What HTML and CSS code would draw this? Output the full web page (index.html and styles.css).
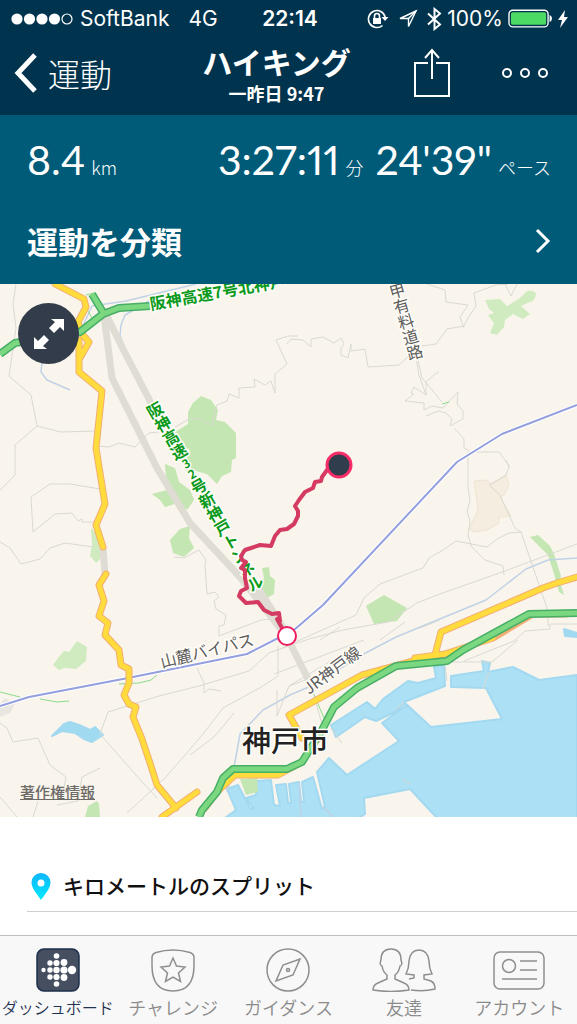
FILE: index.html
```html
<!DOCTYPE html>
<html lang="ja">
<head>
    <meta charset="UTF-8">
    <meta name="viewport" content="width=device-width, initial-scale=1.0">
    <title>ハイキング</title>
    <link rel="stylesheet" href="styles.css">
</head>
<body>
    <header class="top">
        <div class="status-bar">
            <div class="status-left">
                <svg width="62" height="14" viewBox="0 0 62 14" aria-hidden="true">
                    <g fill="#fff"><circle cx="6" cy="7" r="5.6"/><circle cx="18.5" cy="7" r="5.6"/><circle cx="31" cy="7" r="5.6"/><circle cx="43.5" cy="7" r="5.6"/></g>
                    <circle cx="56" cy="7" r="5" fill="none" stroke="#fff" stroke-width="1.2"/>
                </svg>
                <span class="carrier">SoftBank</span>
                <span>4G</span>
            </div>
            <time class="clock">22:14</time>
            <div class="status-right">
                <svg width="22" height="20" viewBox="0 0 22 20" fill="none" stroke="#fff" stroke-width="1.6" aria-hidden="true">
                    <path d="M15.500 16.500A8.500 8.500 0 1 1 18.200 8"/>
                    <path d="M14.500 8h7l-3.500 4z" fill="#fff" stroke="none"/>
                    <rect x="6" y="9" width="8" height="6" fill="#fff" stroke="none"/>
                    <path d="M7.500 9V7a2.500 2.500 0 0 1 5 0v2"/>
                </svg>
                <svg class="location" width="20" height="20" viewBox="0 0 20 20" fill="none" stroke="#fff" stroke-width="1.4" aria-hidden="true">
                    <path d="M18 2L2 9.500h8.500V17.500z"/>
                    <path d="M18 2l-7.500 7.500"/>
                </svg>
                <svg width="15" height="24" viewBox="0 0 15 24" fill="none" stroke="#fff" stroke-width="2" aria-hidden="true">
                    <path d="M1 6.500l12 11L7.500 22V2L13 6.500l-12 11"/>
                </svg>
                <span class="percent">100%</span>
                <svg width="44" height="20" viewBox="0 0 45 20" aria-hidden="true">
                    <rect x="1" y="1" width="40" height="17" rx="4" fill="none" stroke="#fff" stroke-width="1.4"/>
                    <rect x="3" y="3" width="36" height="13" rx="2" fill="#4cd964"/>
                    <path d="M42.500 6q2.500 1 2.500 3.500t-2.500 3.500z" fill="#fff"/>
                </svg>
                <svg width="12" height="18" viewBox="0 0 12 18" aria-hidden="true"><path d="M8 0L1 10h4L3 18l8-11H7z" fill="#fff"/></svg>
            </div>
        </div>
        <nav class="nav-bar">
            <a class="back" href="#">
                <svg width="24" height="40" viewBox="0 0 24 40" fill="none" stroke="#fff" stroke-width="5" aria-hidden="true"><path d="M21 2L4 20l17 18"/></svg>
                運動
            </a>
            <div class="title">
                <h1>ハイキング</h1>
                <p>一昨日 9:47</p>
            </div>
            <div class="actions">
                <button type="button" aria-label="共有">
                    <svg width="38" height="50" viewBox="0 0 38 50" fill="none" stroke="#fff" stroke-width="2">
                        <path d="M15 15H2v33h34V15H23M19 31V2M12 10l7-8 7 8"/>
                    </svg>
                </button>
                <button type="button" aria-label="メニュー">
                    <svg width="48" height="12" viewBox="0 0 48 12" fill="none" stroke="#fff" stroke-width="2"><circle cx="6" cy="6" r="4"/><circle cx="24" cy="6" r="4"/><circle cx="42" cy="6" r="4"/></svg>
                </button>
            </div>
        </nav>
    </header>

    <main>
        <section class="summary">
            <div class="stats">
                <p class="stat distance"><strong>8.4</strong><span>km</span></p>
                <p class="stat"><strong>3:27:11</strong><span>分</span></p>
                <p class="stat"><strong>24'39"</strong><span>ペース</span></p>
            </div>
            <a class="classify" href="#">
                運動を分類
                <svg width="16" height="26" viewBox="0 0 16 26" fill="none" stroke="#fff" stroke-width="3" aria-hidden="true"><path d="M2 2l11 11L2 24"/></svg>
            </a>
        </section>

        <section class="map">
            <svg class="map-canvas" viewBox="0 284 577 533">
                <rect class="land" y="284" width="577" height="533"/>

                <!-- parks -->
                <g class="park">
                    <path d="M188 412l5-9 8-7 10 4 7 10-2 10 9 2 11 11v25l-4 2-1 12-9 4-5 8-10-10-15-4-8-10-9-28 13-8z"/>
                    <path d="M152 494l15-4-2-26 10 4 4 14 11 8 4 10-7 10-9-7-13 4-5-7z"/>
                    <path d="M170 540l10-11 10-3-1 12 5 10-10 9-11-4z"/>
                    <path d="M262 568l7-1 1 9 5 4-1 14-7 4-7-10 4-10z"/>
                    <path d="M366 606l18-11 23 13-10 13-23 3z"/>
                    <path d="M85 817l3-11 9-5 2 3 1 13z"/>
                    <path d="M530 537l8-2 12 11 4 8 7 22-1 6 4 13-5-3-5-18-6-19z"/>
                </g>
                <g class="park light">
                    <path d="M485 300l15-1 7 7 13-8 7-7q8-1 9 3-1 7-6 8l-9 4 9 8-7 5-10-5-8 6-1 7-7 8-7-2 4-10-6-8 6-2-5-4z"/>
                    <path d="M53 665l5-7 6-7 5 1 8-11 10 6-1 14-10 8-11-1-6 2z"/>
                    <path d="M91 528l7 7 3 23-5 5-6-7 2-11z"/>
                </g>
                <path class="school" d="M474 481l13-1 5 5 14-10 3 10-5 10-4 2 11 19-12 1 0 6-12 7-12 2-6-3 9-19z"/>
                <path class="block" d="M0 704l5-6 10 6-5 9-10 4z"/>

                <!-- sea and ponds -->
                <path class="water" d="M577 675l-38 5-26-13-25 5 2-9-8-2 2 10-33 5v11l35 1 16 31-71 8-27-25 41-16-1-21-10 2 2 11-18 5-10-2-25 18-8 10-8-7-36 23 5 12 29-20 11 4 19-9 9-8 3 1-25 18 17 18-52 34-18-17-12 14 8 35-3 2-9-32-11 5 2 20h-3l-2-20-10 2 2 19h-3l-2-19-10 1 4 21-6-1-3-25-14 1-1 14-10 3 8 11-4-1-12-23-11 4 9 21-11 8v2h131l9-6-1-16 46-9 27 29v2h140z"/>
                <path class="water pond" d="M52 736l12-12 6-2 9 3 11 5 5-3 8 8-11 7-8-3-9-6-13-2z"/>
                <path class="water pond" d="M564 629l13 4v4l-12-1z"/>
                <path class="park" d="M240 779l17-1 1 14-12 3z"/>

                <!-- streams -->
                <g class="stream">
                    <path d="M196 284l-70 17-34 5-10 22M151 300l-26 15-4 10-1 10 4 12M42 362l-1 10 6 8 23 10"/>
                    <path d="M577 558l-29 2-22 9-40 31-90 37-38 20-40 26-28 12-27 15-23 24-5 28-8 30"/>
                    <path d="M299 783l2 34M323 806l10 11"/>
                </g>

                <!-- small streets -->
                <g class="street">
                    <path d="M16 284l-3 20 3 24-7 48 22 19 6 31 24 6 34-1M37 426l-22 19v30L0 490M98 446l11 1 10-4 16 4 14-14 20-2 20-12 7-1 16 7 5-20 10-4 2-7 10 4v-10l16-1-1-8 11 6 6-4 4 12v-19l12-10-11-24 12-4h10"/>
                    <path d="M287 344l4-5 12 1 8 7v-8l12-2 11 6 7-5 3 6-3 4v7l7 3 3-14v7l14-2 3 18 31-2 9-8M422 346l14-2 11-15 17-3 4-8 8-12-2-13 22-8 12-1M427 284l12 4 6 2 1 12 22 3-8 12 4 11M505 284l6 12 6-12"/>
                    <path d="M416 358l3 17 7 20 0-13 9-8 4-2M418 360l4 18 20 24M426 395l-12-8-3 6 3 1-9 7 19 2 0 7 8-4 11 2 15-16-1 12 6 7 0 8-13 7 2-7-6-6-8-2-12 5"/>
                    <path d="M454 428l10 11 0 9 7 4h28l11 15M468 452v35l2 14-3 10 3 10-2 14 3 11 14 14 18 6 1 9"/>
                    <path d="M506 460l3 7-3 8-17 10 11 10 15 33 6 4 27 79v15M521 532l-12 1-12 6-10 8-31-6-13 9-14 8-6 10-43 16-16 14-8 17-45 20-29 13"/>
                    <path d="M577 544l-72 27-68 24-20 8-29 19-45 8-34 9-40 14-20 18-20 6-30 9-40 10-51 16-8 22 35 40 22 24M577 624h-27v5l-25 2-11 10-50 20M518 640l-26 22h-47"/>
                    <path d="M0 542l10 6 11 16 19-5 10-11 15-5 28 4M100 489l-30-5-20 0-19 13 2 35 22-18 17-1 6 8 4-2v3h13M174 557l10 1 15-8 7 10-1 5 2 29 8-2 4 5-5 4 2 8 10 6-2 10-5 1v10l42-16 12-1 20 14"/>
                    <path d="M0 723l7 5 6 14 25-4 12 27 16 12-3 16M100 768l-18 9-4 24-21 4M33 817l5-16M0 797l17 20M197 668l7 15v10l5-4 12 2M127 813l38-35 20-23 18-21 20-26 40-22 15-10v-30M190 755l24-18 20-24M277 690l0 26 12-30 60-22M289 686l62-37M316 703l10 35M331 728l11 15M410 784l-8-5"/>
                    <path d="M445 665l2 16M489 672l-6 17M395 710l9-8M364 640l-90 34M420 628l20-8M320 640l20-13M380 640l25-18"/>
                </g>
                <g class="trail"><path d="M0 692l20 5M40 699l17 3 12-1M119 684l20-1 12-3 6-5M284 640l6 7M312 690l12 28M442 404l7-2M86 295l8-2M84 304l8 14"/></g>

                <!-- tunnels -->
                <g class="tunnel">
                    <path d="M104 315l8 63 45 90 33 55 50 54 47 60 27 54"/>
                    <path d="M105 312l18 37 28 54M258 588l33 52"/>
                    <path d="M103 548l2 26"/>
                </g>

                <!-- railway -->
                <path class="rail-casing" d="M0 706l29-9 99-19 119-24 47-24 29-25 134-143 45-28 75-29"/>
                <path class="rail" d="M0 706l29-9 99-19 119-24 47-24 29-25 134-143 45-28 75-29"/>

                <!-- main roads, casing first -->
                <g class="road-casing">
                    <path d="M55 284l29 15 2 8-8 15 4 12 7 8-9 16M79 340v32l23 19-6 57 9 56-9 21 7 22M106 574l-7 11 5 16-5 15 9 7-3 12 14 15 2 15 8 4v14l-5 12 5 9 7 3-3 10 9 22 8 24 7 22 19 23M162 817l35-25"/>
                    <path d="M577 577l-20 6-14 5-102 44-6 23-73 20-73 40 13 23M415 658l30-4 48-16 40-24h33M205 808l12-16 18-17h43l24-13M318 739l5-11"/>
                </g>
                <g class="road">
                    <path d="M55 284l29 15 2 8-8 15 4 12 7 8-9 16M79 340v32l23 19-6 57 9 56-9 21 7 22M106 574l-7 11 5 16-5 15 9 7-3 12 14 15 2 15 8 4v14l-5 12 5 9 7 3-3 10 9 22 8 24 7 22 19 23M162 817l35-25"/>
                    <path d="M577 577l-20 6-14 5-102 44-6 23-73 20-73 40 13 23M415 658l30-4 48-16M205 808l12-16 18-17h43l24-13"/>
                </g>
                <path class="motorway-casing" d="M577 613l-48 1-66 36-16 11-51 5-39 22-23 19-12 23-20 32-15 7h-54l-10 9-6 14-15 18-3 7M0 354l15-11 65-11 23-18 16-6 31-2M92 294l12 20"/>
                <path class="motorway" d="M577 613l-48 1-66 36-16 11-51 5-39 22-23 19-12 23-20 32-15 7h-54l-10 9-6 14-15 18-3 7M0 354l15-11 65-11 23-18 16-6 31-2M92 294l12 20"/>

                <!-- labels -->
                <g class="label highway">
                    <text x="151" y="310" transform="rotate(-10 151 310)">阪神高速7号北神戸</text>
                    <text class="vertical" x="151" y="403" transform="rotate(-30 151 403)">阪神高速<tspan class="digits">32</tspan>号新神戸トンネル</text>
                </g>
                <g class="label">
                    <text class="vertical" x="395" y="283" transform="rotate(-16 395 283)">甲有料道路</text>
                    <text x="162" y="668" transform="rotate(-14 162 668)">山麓バイパス</text>
                    <text x="309" y="695" transform="rotate(-37 309 695)">JR神戸線</text>
                </g>
                <text class="label city" x="242" y="752">神戸市</text>

                <!-- recorded route -->
                <path class="route" d="M339 465l-12 5-5 7-1 4-6 1-2 6-8 4-6 8-4 6 3 5v5l-4 8-7 5-7 1-5 6-4 10-11-1-15 5-4 6 1 4 4 2-5 6 4 2v8l2 10-6 3-2 5 7 7 12-1 6 8 8 4 7-1 1 8-3-2 5 9 4 4"/>
                <circle class="route-end" cx="339" cy="465" r="12"/>
                <circle class="route-start" cx="287" cy="636" r="9"/>
            </svg>
            <button class="expand" type="button" aria-label="地図を拡大">
                <svg width="32" height="32" viewBox="0 0 32 32" fill="#fff"><path d="M31 1v12l-4-4-6 6-5-5 6-6-4-3zM1 31V19l4 4 6-6 5 5-6 6 4 3z"/></svg>
            </button>
            <a class="legal" href="#">著作権情報</a>
        </section>

        <section class="splits">
            <h2>
                <svg width="20" height="28" viewBox="0 0 20 28" aria-hidden="true">
                    <defs><linearGradient id="pin" x2="0" y2="1"><stop stop-color="#10b5fb"/><stop offset="1" stop-color="#00ebff"/></linearGradient></defs>
                    <path fill="url(#pin)" fill-rule="evenodd" d="M10 0a9.500 9.500 0 0 1 9.500 9.500C19.500 15 15 20 10 27 5 20 .5 15 .5 9.500A9.500 9.500 0 0 1 10 0zm0 6.500a3.500 3.500 0 1 0 0 7 3.500 3.500 0 0 0 0-7z"/>
                </svg>
                <span>キロメートルのスプリット</span>
            </h2>
        </section>
    </main>

    <nav class="tab-bar">
        <a class="tab active" href="#">
            <svg width="44" height="44" viewBox="0 0 44 44" aria-hidden="true">
                <rect x="1" y="1" width="42" height="42" rx="7" fill="#454f60" stroke="#1c2f4b"/>
                <g fill="#fff">
                    <circle cx="7.500" cy="22" r="2.2"/>
                    <circle cx="14" cy="15" r="2.700"/><circle cx="14" cy="22" r="2.700"/><circle cx="14" cy="29" r="2.700"/>
                    <circle cx="20.500" cy="8" r="2.800"/><circle cx="20.500" cy="15" r="3.100"/><circle cx="20.500" cy="22" r="3.200"/><circle cx="20.500" cy="29" r="3.100"/><circle cx="20.500" cy="36" r="2.800"/>
                    <circle cx="28" cy="14.500" r="3.400"/><circle cx="28" cy="22" r="3.600"/><circle cx="28" cy="29.500" r="3.400"/>
                    <circle cx="36" cy="22" r="4.200"/>
                </g>
            </svg>
            <span>ダッシュボード</span>
        </a>
        <a class="tab" href="#">
            <svg width="44" height="44" viewBox="0 0 44 44" aria-hidden="true">
                <path d="M5 4.500Q22-.500 39 4.500q4 1.500 4 5v8C43 34 36 43 22 43S1 34 1 17.500v-8q0-3.500 4-5z"/>
                <path d="M22 10l3.500 8 8.500 1-6.500 6 2 8.500L22 29l-7.500 4.500 2-8.500-6.500-6 8.500-1z"/>
            </svg>
            <span>チャレンジ</span>
        </a>
        <a class="tab" href="#">
            <svg width="44" height="44" viewBox="0 0 44 44" aria-hidden="true">
                <circle cx="22" cy="22" r="21"/>
                <path d="M34 11l-7 16-17 6 7-16z"/>
                <circle cx="22" cy="22" r="1.500"/>
            </svg>
            <span>ガイダンス</span>
        </a>
        <a class="tab" href="#">
            <svg width="64" height="44" viewBox="0 0 64 44" aria-hidden="true">
                <path d="M15 31v-4q-4-3-5-9-3-1-1-6C9 4 13 1 19 1s10 3 10 11q2 5-1 6-1 6-5 9v4l9 4q5 2 5 7Q19 45 1 42q0-5 5-7z"/>
                <path d="M37 31l5-1v-3l-8-1q3-6 3-13c1-8 5-11 10-11s9 3 10 11q0 7 3 13l-8 1v4l7 2q4 2 4 8-11 3-24 1"/>
            </svg>
            <span>友達</span>
        </a>
        <a class="tab" href="#">
            <svg width="52" height="44" viewBox="0 0 52 44" aria-hidden="true">
                <rect x="1" y="4" width="50" height="37" rx="6"/>
                <circle cx="16" cy="18" r="6.500"/>
                <path d="M27 13h17M27 22h17M9 31h35"/>
            </svg>
            <span>アカウント</span>
        </a>
    </nav>
</body>
</html>
```
FILE: styles.css
```css
* {
    box-sizing: border-box;
}
body {
    display: flex;
    flex-direction: column;
    min-height: 100vh;
    margin: 0;
    background: #fff;
    color: #fff;
    font-family: "Noto Sans CJK JP", sans-serif;
}
h1, h2, p {
    margin: 0;
}
a {
    color: inherit;
    text-decoration: none;
}
button {
    display: flex;
    padding: 0;
    border: 0;
    background: none;
    cursor: pointer;
}
svg {
    display: block;
    flex: none;
}
main {
    display: flex;
    flex-direction: column;
    flex: 1;
}

/* Status bar and navigation */
.top {
    background: #00334d;
}
.status-bar {
    display: grid;
    grid-template-columns: 1fr auto 1fr;
    align-items: center;
    height: 37px;
    padding: 0 8px 0 11px;
    font-family: Inter, sans-serif;
    font-size: 21px;
}
.status-left,
.status-right {
    display: flex;
    align-items: center;
}
.status-left {
    gap: 7px;
}
.carrier {
    margin-right: 12px;
}
.clock {
    font-weight: 600;
}
.status-right {
    justify-content: flex-end;
    gap: 5px;
}
.location {
    margin: 0 4px;
}
.nav-bar {
    display: grid;
    grid-template-columns: 1fr auto 1fr;
    align-items: center;
    height: 78px;
    padding: 0 28px 6px 4px;
}
.back {
    display: flex;
    align-items: center;
    gap: 10px;
    padding-left: 10px;
    font-size: 32px;
    font-weight: 300;
    line-height: 40px;
}
.title {
    text-align: center;
}
.title h1 {
    font-size: 30px;
    font-weight: 700;
    line-height: 40px;
}
.title p {
    font-size: 18px;
    font-weight: 700;
    line-height: 24px;
}
.actions {
    display: flex;
    align-items: center;
    justify-content: flex-end;
    gap: 50px;
}

/* Summary */
.summary {
    height: 169px;
    padding: 16px 26px 0 27px;
    background: #005b79;
}
.stats {
    display: flex;
    align-items: baseline;
    gap: 12px;
    height: 80px;
}
.stat {
    display: flex;
    align-items: baseline;
    gap: 6px;
    font-size: 18px;
    font-weight: 300;
    line-height: 58px;
}
.stat strong {
    font-family: Lato, sans-serif;
    font-size: 41px;
    font-weight: 400;
    font-variant-numeric: proportional-nums;
}
.distance {
    margin-right: auto;
}
.classify {
    display: flex;
    align-items: center;
    justify-content: space-between;
    font-size: 31px;
    font-weight: 700;
    line-height: 60px;
}

/* Map */
.map {
    position: relative;
}
.map-canvas {
    width: 100%;
    height: auto;
}
.expand {
    position: absolute;
    top: 19px;
    left: 18px;
    align-items: center;
    justify-content: center;
    width: 61px;
    height: 61px;
    border-radius: 50%;
    background: #333c4a;
}
.legal {
    position: absolute;
    bottom: 14px;
    left: 20px;
    color: #6d6b67;
    font-size: 15px;
    font-weight: 500;
    line-height: 22px;
    text-decoration: underline;
}
.map-canvas path {
    stroke-linejoin: round;
}
.land {
    fill: #f9f5ed;
}
.park {
    fill: #c3e6b2;
}
.park.light {
    fill: #d0ebbf;
}
.school {
    fill: #f5eddf;
    stroke: #f0e4d1;
}
.block {
    fill: #e9e6e2;
}
.water {
    fill: #abe0f5;
    stroke: #a3d9f0;
    stroke-width: 2;
}
.water.pond {
    fill: #9fdaf0;
}
.stream,
.street,
.trail,
.tunnel,
.road,
.road-casing,
.rail,
.rail-casing,
.motorway,
.motorway-casing,
.route {
    fill: none;
}
.stream {
    stroke: #c0d2e6;
    stroke-width: 1.5;
}
.street {
    stroke: #d9d9d2;
}
.trail {
    stroke: #8cdb8a;
}
.tunnel {
    stroke: #dfdcd3;
    stroke-width: 7;
}
.rail-casing {
    stroke: #fff;
    stroke-width: 4;
}
.rail {
    stroke: #939fdf;
    stroke-width: 2;
}
.road-casing {
    stroke: #f3ae75;
    stroke-width: 7;
    stroke-linecap: round;
}
.road {
    stroke: #ffdc3c;
    stroke-width: 5;
    stroke-linecap: round;
}
.motorway-casing {
    stroke: #46ae65;
    stroke-width: 8;
}
.motorway {
    stroke: #7bd881;
    stroke-width: 5;
}
.label {
    fill: #5c5c5c;
    stroke: #fffdf8;
    stroke-width: 3;
    paint-order: stroke;
    font-size: 16px;
}
.label.highway {
    fill: #0a9a1c;
    font-weight: 700;
}
.vertical {
    writing-mode: vertical-rl;
    text-orientation: upright;
}
.digits {
    font-size: 12px;
}
.label.city {
    fill: #222;
    font-size: 29px;
    font-weight: 500;
}
.route {
    stroke: #d43a62;
    stroke-width: 4;
}
.route-end {
    fill: #303d4d;
    stroke: #f52d68;
    stroke-width: 3;
}
.route-start {
    fill: #fff;
    stroke: #f01c60;
    stroke-width: 2;
}

/* Splits */
.splits {
    flex: 1;
    padding: 45px 0 23px 27px;
}
.splits h2 {
    display: flex;
    align-items: center;
    gap: 12px;
    height: 50px;
    padding-left: 4px;
    border-bottom: 1px solid #cfcfcf;
    color: #111;
    font-size: 21px;
    font-weight: 500;
}
.splits span {
    padding-bottom: 4px;
}

/* Tab bar */
.tab-bar {
    display: grid;
    grid-template-columns: repeat(5, 1fr);
    height: 89px;
    padding-top: 12px;
    border-top: 1px solid #bfbfbf;
    background: #f8f8f8;
    color: #8a8a8a;
}
.tab {
    display: flex;
    flex-direction: column;
    align-items: center;
    gap: 3px;
    min-width: 0;
    font-size: 18px;
    font-weight: 350;
    line-height: 24px;
    white-space: nowrap;
}
.tab svg {
    fill: none;
    stroke: #8e8e8e;
    stroke-width: 1.5;
}
.tab.active {
    color: #1f3350;
    font-size: 16px;
}
.tab.active svg {
    stroke: none;
}
```
